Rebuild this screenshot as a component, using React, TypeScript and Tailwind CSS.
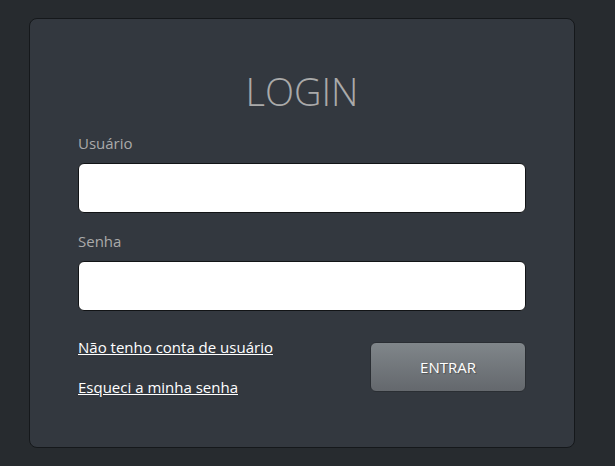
import type { ComponentProps } from "react";

type FieldProps = ComponentProps<"input"> & { id: string; label: string };

function Field({ id, label, ...input }: FieldProps) {
  return (
    <div className="flex flex-col gap-2">
      <label htmlFor={id} className="text-[15px] leading-6">
        {label}
      </label>
      <input
        id={id}
        name={id}
        className="h-[50px] w-full rounded-md border border-[#121416] bg-white px-4 text-base text-[#272b30] outline-none"
        {...input}
      />
    </div>
  );
}

export default function App() {
  return (
    <main className="min-h-screen bg-[#272b2f] pt-[18px] pr-10 pb-[18px] pl-[29px] font-['Open_Sans','Noto_Sans',sans-serif] text-[#aaaaaa]">
      <form
        onSubmit={(event) => event.preventDefault()}
        className="w-full rounded-lg border border-[#15181b] bg-[#33383f] p-12"
      >
        <h1 className="mb-4 text-center text-[38px] leading-12 font-light">LOGIN</h1>
        <div className="flex flex-col gap-4">
          <Field id="usuario" label="Usuário" type="text" autoComplete="username" />
          <Field id="senha" label="Senha" type="password" autoComplete="current-password" />
        </div>
        <div className="mt-6 flex items-center justify-between">
          <nav className="flex flex-col gap-4 text-[15px] leading-6 text-white">
            <a href="#cadastro" className="underline">
              Não tenho conta de usuário
            </a>
            <a href="#recuperar" className="underline">
              Esqueci a minha senha
            </a>
          </nav>
          <button
            type="submit"
            className="h-[50px] min-w-[156px] rounded-md border border-[#2a2e33] bg-linear-to-b from-[#80868a] to-[#64686d] px-12 text-[15px] leading-6 text-white text-shadow-[1px_1px_1px_rgba(0,0,0,0.3)]"
          >
            ENTRAR
          </button>
        </div>
      </form>
    </main>
  );
}
